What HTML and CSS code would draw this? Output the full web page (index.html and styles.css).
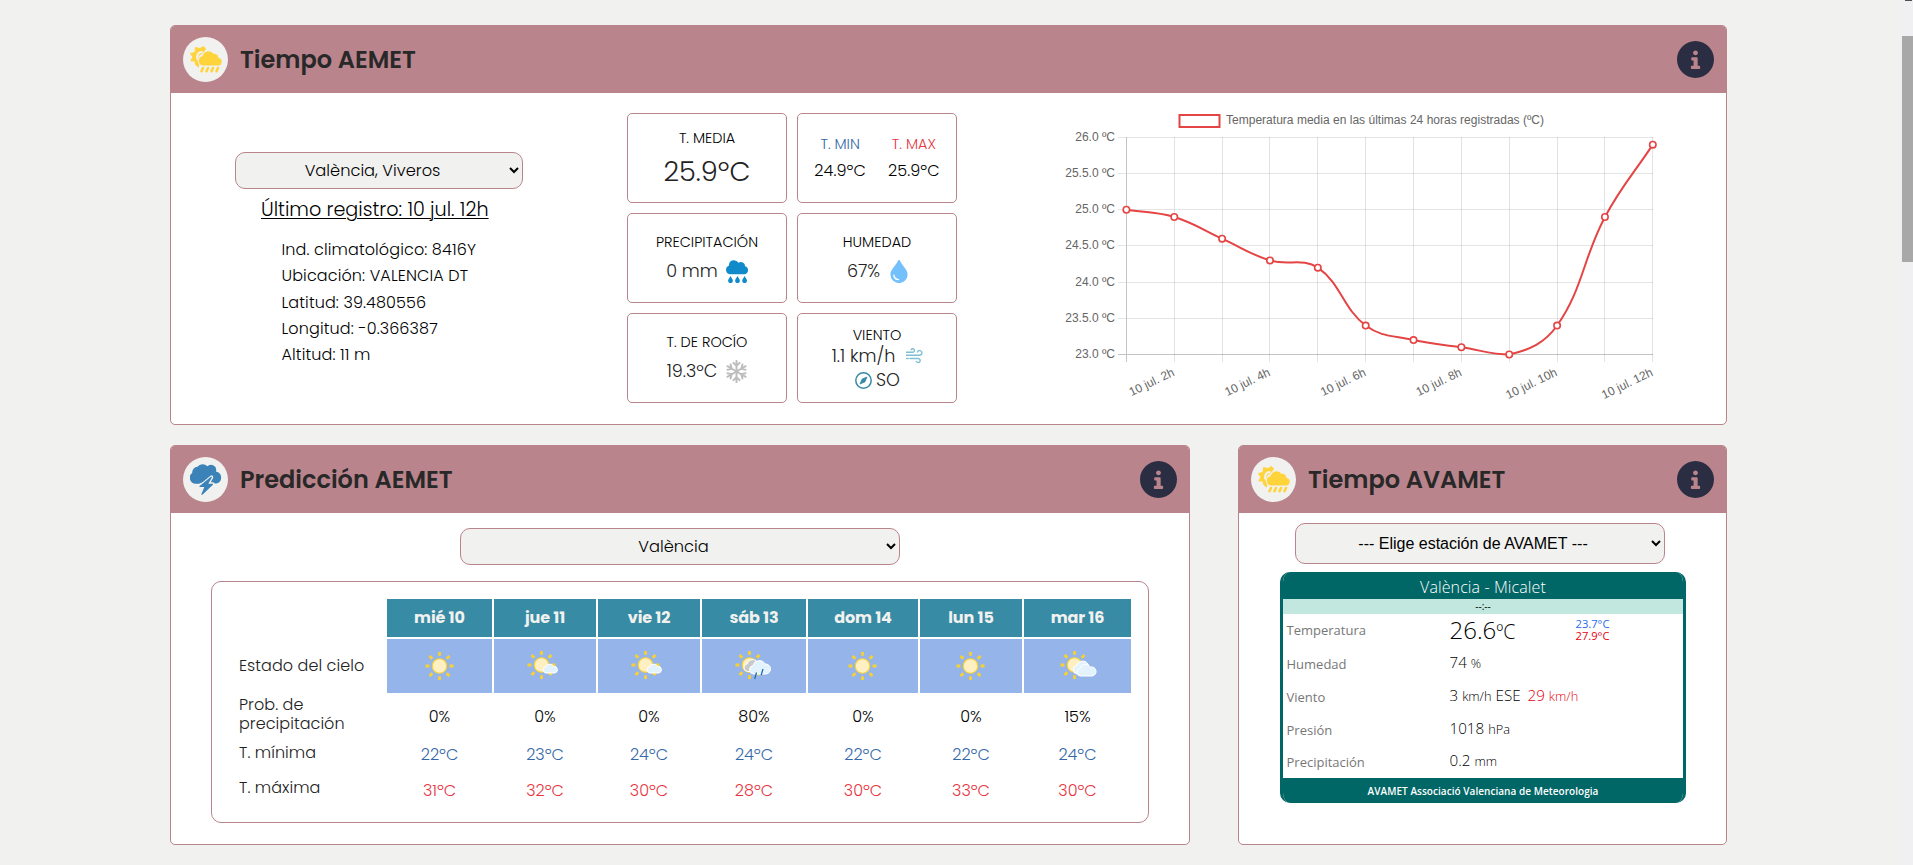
FILE: index.html
```html
<!DOCTYPE html>
<html lang="es">
<head>
<meta charset="utf-8">
<title>Tiempo</title>
<link rel="stylesheet" href="styles.css">
</head>
<body>
<svg class="sprite" aria-hidden="true">
  <symbol id="info" viewBox="8 8 496 496"><path d="M256 8C119.043 8 8 119.083 8 256c0 136.997 111.043 248 248 248s248-111.003 248-248C504 119.083 392.957 8 256 8zm0 126c18 0 33 15 33 33s-15 33-33 33-33-15-33-33 15-33 33-33zm62 236c0 9-6 15-14 15h-96c-8 0-14-6-14-15v-15c0-9 6-15 14-15h22v-70h-17c-8 0-14-6-14-14v-16c0-8 6-14 14-14h58c8 0 14 6 14 14v100h19c8 0 14 6 14 15z"/></symbol>
  <symbol id="sunrain" viewBox="0 0 32 28">
    <path d="M5.500 1.500 10 2.600 13.500.500 15.500 3 13 6.500 8 10 9 17 8.500 18 8.500 21 5.500 18.500 5 15 .800 14.800 3 11 .300 7.500 5 6.500z" stroke="#ffd43b" stroke-linejoin="round"/>
    <path d="M10 15a4.800 4.800 0 0 1-3-4.500A5.500 5.500 0 0 1 12.500 6" fill="none" stroke="#f1f1ef" stroke-width="2"/>
    <path d="M13.500 20a5.200 5.200 0 0 1-1.300-10.200 6.500 6.500 0 0 1 11.500-2.500 4.500 4.500 0 0 1 5 4.200 4.300 4.300 0 0 1-1.200 8.500z" stroke="#f1f1ef" stroke-width="1"/>
    <path d="m13 22-1.500 3.200M18 22l-1.500 3.200M23 22l-1.500 3.200M28 22l-1.500 3.200" stroke="#ffd43b" stroke-width="2.600" stroke-linecap="round"/>
  </symbol>
  <symbol id="storm" viewBox="0 0 32 32">
    <path d="M6 19.800A6 6 0 0 1 2.200 9 5.800 5.800 0 0 1 7.500 2.800 6.500 6.500 0 0 1 17.300 2.200 5.300 5.300 0 0 1 26 7.500 6.200 6.200 0 0 1 26.500 19.600H22L16 17 9 19.800z"/>
    <path d="M21.500 13 10 22.500h5L12 30.500 22.800 20h-5l3.700-6.500z" fill="none" stroke="#f1f1ef" stroke-width="3.400" stroke-linejoin="round"/>
    <path d="M21.300 13.300 10 22.500h5.200L12 30.200 22.500 20.300h-5.200z" stroke="#3b82b8" stroke-width="1.200" stroke-linejoin="round"/>
  </symbol>
  <symbol id="rain" viewBox="0 0 23 23">
    <path d="M4.500 14.300A4.600 4.600 0 0 1 3 5.400 5 5 0 0 1 7.200.200a5.500 5.500 0 0 1 5.300 2.500 4.200 4.200 0 0 1 6.600 3.500A4.200 4.200 0 0 1 18.800 14.300z"/>
    <path d="M4.500 16c.8 1.800 2.400 3 2.400 4.700a2.400 2.400 0 0 1-4.800 0c0-1.700 1.600-2.900 2.400-4.700z"/>
    <path d="M11.500 16c.8 1.800 2.400 3 2.400 4.700a2.400 2.400 0 0 1-4.800 0c0-1.700 1.600-2.900 2.400-4.700zM18.600 16c.8 1.800 2.400 3 2.400 4.700a2.400 2.400 0 0 1-4.800 0c0-1.700 1.600-2.900 2.400-4.700z"/>
  </symbol>
  <symbol id="drop" viewBox="0 0 18 23">
    <path d="M9 0c.6 0 .9.300 1.100.8C12 6 17.600 9.300 17.600 14.500a8.600 8.600 0 0 1-17.200 0C.4 9.300 6 6 7.900.8 8.100.300 8.400 0 9 0z"/>
    <path d="M3.900 15.300c.3 2.600 2 4 4.600 4.300" fill="none" stroke="#fff" stroke-width="1.400" stroke-linecap="round"/>
  </symbol>
  <symbol id="snow" viewBox="0 0 24 24">
    <g fill="none" stroke="#bdbdbd" stroke-width="2.100" stroke-linecap="round">
      <path d="M12 12V1M8.800 3 12 6.200 15.200 3"/>
      <path d="M12 12V1M8.800 3 12 6.200 15.200 3" transform="rotate(60 12 12)"/>
      <path d="M12 12V1M8.800 3 12 6.200 15.200 3" transform="rotate(120 12 12)"/>
      <path d="M12 12V1M8.800 3 12 6.200 15.200 3" transform="rotate(180 12 12)"/>
      <path d="M12 12V1M8.800 3 12 6.200 15.200 3" transform="rotate(240 12 12)"/>
      <path d="M12 12V1M8.800 3 12 6.200 15.200 3" transform="rotate(300 12 12)"/>
    </g>
  </symbol>
  <symbol id="wind" viewBox="0 0 17 16">
    <path d="M.5 4.200h6.300a1.700 1.700 0 1 0-1.600-2.500M.5 7.200h13.200a2.300 2.300 0 1 0-2.200-3.200M.5 10.500h1.700M4 10.500h8.300a2 2 0 1 1-1.900 3" fill="none" stroke="#7fc0d2" stroke-width="1.400" stroke-linecap="round"/>
  </symbol>
  <symbol id="compass" viewBox="0 0 17 17">
    <circle cx="8.500" cy="8.500" r="7.700" fill="none" stroke="#378ba4" stroke-width="1.500"/>
    <path d="M12 5 9.900 9.900 5 12 7.100 7.100z" stroke="#378ba4" stroke-width=".8" stroke-linejoin="round"/>
  </symbol>
  <symbol id="sun" viewBox="0 0 30 30">
    <path d="M15 .5v4M15 25.500v4M.5 15h4M25.500 15h4M4.700 4.700l2.900 2.900M22.400 22.400l2.900 2.900M4.700 25.300l2.900-2.900M22.400 7.600l2.900-2.900" stroke="#f8d12f" stroke-width="2.900"/>
    <circle cx="15" cy="15" r="7.500" fill="#fff0c4" stroke="#f8d12f" stroke-width="1.200"/>
  </symbol>
</svg>
<main class="page">
  <section class="card wide">
    <header class="bar">
      <span class="badge"><svg class="ic-sunrain"><use href="#sunrain"/></svg></span>
      <h2>Tiempo AEMET</h2>
      <svg class="info"><use href="#info"/></svg>
    </header>
    <div class="current">
      <div class="station">
        <select class="pick"><option>València, Viveros</option></select>
        <p class="last">Último registro: 10 jul. 12h</p>
        <ul class="facts">
          <li>Ind. climatológico: 8416Y</li>
          <li>Ubicación: VALENCIA DT</li>
          <li>Latitud: 39.480556</li>
          <li>Longitud: -0.366387</li>
          <li>Altitud: 11 m</li>
        </ul>
      </div>
      <div class="tiles">
        <div class="tile media"><h3>T. MEDIA</h3><p class="big">25.9ºC</p></div>
        <div class="tile minmax">
          <div><h3 class="cold">T. MIN</h3><p>24.9ºC</p></div>
          <div><h3 class="hot">T. MAX</h3><p>25.9ºC</p></div>
        </div>
        <div class="tile std"><h3>PRECIPITACIÓN</h3><p class="val">0 mm <svg class="ic-rain"><use href="#rain"/></svg></p></div>
        <div class="tile std"><h3>HUMEDAD</h3><p class="val hum">67% <svg class="ic-drop"><use href="#drop"/></svg></p></div>
        <div class="tile std"><h3>T. DE ROCÍO</h3><p class="val">19.3ºC <svg class="ic-snow"><use href="#snow"/></svg></p></div>
        <div class="tile wind"><h3>VIENTO</h3><p class="val speed">1.1 km/h <svg class="ic-wind"><use href="#wind"/></svg></p><p class="val dir"><svg class="ic-compass"><use href="#compass"/></svg>SO</p></div>
      </div>
      <svg class="chart" id="chart" viewBox="1040 100 640 315"></svg>
    </div>
  </section>
  <div class="row">
    <section class="card forecast">
      <header class="bar">
        <span class="badge"><svg class="ic-storm"><use href="#storm"/></svg></span>
        <h2>Predicción AEMET</h2>
        <svg class="info"><use href="#info"/></svg>
      </header>
      <div class="body">
        <select class="pick pick-city"><option>València</option></select>
        <div class="panel">
          <div class="grid">
            <span></span><b>mié 10</b><b>jue 11</b><b>vie 12</b><b>sáb 13</b><b>dom 14</b><b>lun 15</b><b>mar 16</b>
            <span class="lab sky">Estado del cielo</span>
            <i><svg viewBox="0 0 40 34"><use href="#sun" x="5" y="2.500" width="29" height="29"/></svg></i>
            <i><svg viewBox="0 0 40 34"><use href="#sun" x="2" y="1.500" width="29" height="29"/><path class="cloud" d="M20.500 24a3.300 3.300 0 0 1 0-6.300 4.600 4.600 0 0 1 8-.5 3.500 3.500 0 0 1 1.500 6.800z"/></svg></i>
            <i><svg viewBox="0 0 40 34"><use href="#sun" x="2" y="1.500" width="29" height="29"/><path class="cloud" d="M20.500 24a3.300 3.300 0 0 1 0-6.300 4.600 4.600 0 0 1 8-.5 3.500 3.500 0 0 1 1.500 6.800z"/></svg></i>
            <i><svg viewBox="0 0 40 34"><use href="#sun" x="1" y="1.500" width="29" height="29"/><path class="cloud gray" d="M13.500 22.500a3.800 3.800 0 0 1-.5-7.500A6 6 0 0 1 22 11.500l1 11z"/><path class="cloud" d="M19.500 25a4.300 4.300 0 0 1-.5-8.500 6.500 6.500 0 0 1 12-1.500 4.600 4.600 0 0 1 1 10z"/><path d="m22.500 23.500-1.800 6.500m8.300-10-1.800 6" stroke="#1466b0" stroke-width="1.200"/></svg></i>
            <i><svg viewBox="0 0 40 34"><use href="#sun" x="5" y="2.500" width="29" height="29"/></svg></i>
            <i><svg viewBox="0 0 40 34"><use href="#sun" x="5" y="2.500" width="29" height="29"/></svg></i>
            <i><svg viewBox="0 0 40 34"><use href="#sun" x="2" y="1.500" width="29" height="29"/><path class="cloud" d="M19 25a4.300 4.300 0 0 1 0-8.500 6 6 0 0 1 11-1.500l1 10z"/><path class="cloud" d="M22.500 27a3.800 3.800 0 0 1-.5-7.500 5.800 5.800 0 0 1 10.500-1.500 4.600 4.600 0 0 1 2 9z"/></svg></i>
            <span class="lab prob">Prob. de precipitación</span>
            <em>0%</em><em>0%</em><em>0%</em><em>80%</em><em>0%</em><em>0%</em><em>15%</em>
            <span class="lab min">T. mínima</span>
            <em class="cold">22ºC</em><em class="cold">23ºC</em><em class="cold">24ºC</em><em class="cold">24ºC</em><em class="cold">22ºC</em><em class="cold">22ºC</em><em class="cold">24ºC</em>
            <span class="lab max">T. máxima</span>
            <em class="hot">31ºC</em><em class="hot">32ºC</em><em class="hot">30ºC</em><em class="hot">28ºC</em><em class="hot">30ºC</em><em class="hot">33ºC</em><em class="hot">30ºC</em>
          </div>
        </div>
      </div>
    </section>
    <section class="card avamet">
      <header class="bar">
        <span class="badge"><svg class="ic-sunrain"><use href="#sunrain"/></svg></span>
        <h2>Tiempo AVAMET</h2>
        <svg class="info"><use href="#info"/></svg>
      </header>
      <div class="body">
        <select class="pick pick-station"><option>--- Elige estación de AVAMET ---</option></select>
        <div class="widget">
          <h4>València - Micalet</h4>
          <div class="time">--:--</div>
          <dl>
            <dt class="r1">Temperatura</dt><dd class="temp"><span>26.6<small>ºC</small></span><span class="range"><span class="lo">23.7°C</span><span class="hi">27.9°C</span></span></dd>
            <dt>Humedad</dt><dd>74 <small>%</small></dd>
            <dt>Viento</dt><dd>3 <small>km/h</small> ESE <span class="gust">29 <small>km/h</small></span></dd>
            <dt>Presión</dt><dd>1018 <small>hPa</small></dd>
            <dt>Precipitación</dt><dd>0.2 <small>mm</small></dd>
          </dl>
          <div class="foot">AVAMET Associació Valenciana de Meteorologia</div>
        </div>
      </div>
    </section>
  </div>
</main>
<aside class="scroll"><span class="arrow"></span><span class="thumb"></span></aside>
<script src="chart.js"></script>
</body>
</html>
```

FILE: styles.css
```css
* { box-sizing: border-box; margin: 0; padding: 0; }
body {
  display: flex;
  justify-content: space-between;
  height: 865px;
  overflow: hidden;
  background: #f1f1ef;
  color: #000;
  font-family: Poppins, Inter, sans-serif;
  font-weight: 300;
  font-size: 16px;
}
.sprite { position: absolute; width: 0; height: 0; }
svg { display: block; flex: none; }
.page { width: 1727px; padding: 25px 0 0 170px; }
.card { background: #fff; border: 1px solid #b9848c; border-radius: 5px; height: 400px; overflow: hidden; }
.wide { width: 1557px; }
.row { display: flex; gap: 48px; margin-top: 20px; }
.forecast { width: 1020px; }
.avamet { width: 489px; }
.bar { display: flex; align-items: center; height: 67px; padding: 0 12px; background: #b9848c; }
.badge { display: flex; align-items: center; justify-content: center; width: 45px; height: 45px; border-radius: 50%; background: #f1f1ef; }
.bar h2 { flex: 1; margin: 0 0 0 12px; font-size: 24px; font-weight: 600; line-height: 36px; color: #282828; white-space: nowrap; }
.info { width: 37px; height: 37px; fill: #2b2d42; }
.ic-sunrain { width: 32px; height: 28px; fill: #ffd43b; }
.ic-storm { width: 32px; height: 32px; fill: #3b82b8; }

.pick { display: block; height: 37px; padding-right: 1px; border: 1px solid #b9848c; border-radius: 10px; background: #f1f1ef; color: #000; font: 300 16.250px Poppins, Inter, sans-serif; text-align: center; text-align-last: center; }
.current { display: flex; height: 331px; }
.station { width: 456px; padding: 59px 0 0 64px; }
.station .pick { width: 288px; }
.last { margin: 5px 0 0 26px; font-size: 19.200px; line-height: 31px; text-decoration: underline; text-underline-offset: 2px; text-decoration-thickness: 1px; white-space: nowrap; }
.facts { margin: 12px 0 0 46.500px; list-style: none; line-height: 26.250px; letter-spacing: .12px; }
.tiles { display: grid; grid-template-columns: 160px 160px; grid-auto-rows: 90px; gap: 10px; width: 413px; padding-top: 20px; }
.tile { border: 1px solid #b9848c; border-radius: 5px; text-align: center; }
.tile h3 { font-size: 14.400px; font-weight: 300; line-height: 20px; color: #000; }
.media { padding-top: 14px; }
.big { margin-top: 6px; font-size: 27.200px; line-height: 36px; color: #222; }
.minmax { display: flex; justify-content: center; gap: 22px; padding-top: 20px; }
.minmax p { margin-top: 7px; line-height: 20px; letter-spacing: .1px; }
.cold, .tile .cold { color: #3468a8; }
.hot, .tile .hot { color: #e63541; }
.std { padding-top: 18px; }
.val { display: flex; align-items: center; justify-content: center; gap: 8px; height: 24px; margin-top: 7px; padding-left: 1px; font-size: 17.600px; line-height: 24px; color: #222; }
.hum { gap: 10px; }
.wind { padding-top: 11px; }
.speed { gap: 11px; height: 20px; line-height: 20px; margin-top: 1px; }
.dir { gap: 4px; height: 20px; line-height: 20px; margin-top: 4px; }
.ic-rain { width: 23px; height: 23px; fill: #118acb; }
.ic-drop { width: 18px; height: 23px; fill: #74c0fc; }
.ic-snow { width: 23px; height: 23px; }
.ic-wind { width: 17px; height: 16px; }
.ic-compass { width: 17px; height: 17px; fill: #378ba4; }
.chart { width: 640px; height: 315px; margin-top: 7px; font: 12px "Liberation Sans", Arial, sans-serif; }

.pick-city { width: 440px; margin: 15px 0 0 289px; }
.panel { width: 938px; height: 242px; margin: 16px 0 0 40px; padding: 17px 0 0 17px; border: 1px solid #b9848c; border-radius: 10px; }
.grid { display: grid; grid-template-columns: 156px 105px 102px 102px 104px 110px 102px 107px; grid-template-rows: 38px 54px 45px 29px 35px; gap: 2px; }
.grid b { background: #378ba4; color: #f1f1ef; font-size: 16px; font-weight: 700; line-height: 37px; text-align: center; letter-spacing: -.1px; }
.grid i { display: flex; align-items: center; justify-content: center; background: #95b5ea; }
.grid i svg { width: 40px; height: 34px; }
.cloud { fill: #e3f3fd; stroke: #fff; stroke-width: 1; }
.gray { fill: #c9c9c9; }
.grid em { font-style: normal; text-align: center; padding-top: 12px; line-height: 20px; }
.grid em.cold { padding-top: 3px; }
.grid em.hot { padding-top: 8px; }
.lab { padding-left: 10px; color: #222; line-height: 19px; letter-spacing: .06px; }
.sky { padding-top: 17px; }
.prob { padding-right: 30px; }
.min { padding-top: 1px; }
.max { padding-top: 5px; }

.pick-station { width: 370px; height: 41px; margin: 10px 0 0 56px; padding-right: 2px; font: 16px "Liberation Sans", Arial, sans-serif; }
.widget { width: 406px; height: 231px; margin: 8px 0 0 41px; border: 3px solid #006666; border-top: 0; border-bottom: 0; border-radius: 10px; background: #fff; overflow: hidden; font-family: "Open Sans", sans-serif; font-weight: 300; }
.widget h4 { height: 27px; background: #006666; color: #fff; font-size: 16px; font-weight: 300; line-height: 30px; text-align: center; letter-spacing: .1px; }
.time { height: 15px; background: #c1e7df; font-size: 10px; line-height: 15px; text-align: center; font-weight: 400; }
.widget dl { display: grid; grid-template-columns: 163px 1fr; grid-template-rows: 37px 33px 33px 32px 29px; padding-left: 3px; height: 164px; }
.widget dt { font-size: 13px; line-height: 18px; padding: 4px 0 0 .5px; color: #777; font-weight: 400; }
.widget dt.r1 { padding-top: 7px; }
.widget dd { padding: 1px 0 0 .5px; font-size: 15.200px; line-height: 20px; white-space: nowrap; }
.widget dd small { font-size: 12.800px; }
.widget dd.temp { display: flex; padding-top: 1px; font-size: 24px; line-height: 30px; }
.widget dd.temp small { font-size: 19.500px; }
.range { display: flex; flex-direction: column; margin-left: 60px; padding-top: 3px; font-size: 11.200px; font-weight: 400; line-height: 12px; }
.lo { color: #2a6cf0; }
.hi, .gust { color: #e60012; }
.gust { margin-left: 3px; }
.foot { height: 25px; background: #006666; color: #fff; font-size: 10px; font-weight: 600; line-height: 27px; text-align: center; letter-spacing: .04px; }

.scroll { width: 13px; height: 865px; padding-left: 2px; background: #f0f0f2; }
.arrow { display: block; width: 7px; height: 1px; margin-left: 3px; background: #505050; }
.thumb { display: block; width: 11px; height: 226px; margin-top: 35px; background: #a8a8a8; }
```

FILE: chart.js
```javascript
const temps = [25, 24.9, 24.6, 24.3, 24.2, 23.4, 23.2, 23.1, 23, 23.4, 24.9, 25.9];
const left = 1126.4, right = 1652.8, top0 = 137.4, bottom = 354.5;
const step = (right - left) / 11;
const pts = temps.map((t, i) => ({ x: left + i * step, y: bottom - (t - 23) * (bottom - top0) / 3 }));
const out = [];
const line = (x1, y1, x2, y2, c) => out.push(`<path d="M${x1} ${y1}L${x2} ${y2}" stroke="${c}"/>`);
const snap = v => Math.floor(v) + 0.5;

for (let k = 0; k <= 6; k++) {
  const y = snap(top0 + k * (bottom - top0) / 6);
  line(1118, y, 1653, y, k === 6 ? '#c4c4c4' : '#e5e5e5');
  out.push(`<text x="1115" y="${y + 3}" text-anchor="end" fill="#666">${26 - k * 0.5}.0 ºC</text>`);
}
pts.forEach((p, i) => {
  const x = snap(p.x);
  line(x, 137, x, 362, i ? 'rgba(0,0,0,.11)' : '#c4c4c4');
  if (i % 2) {
    out.push(`<text transform="translate(${p.x + 1} 375) rotate(-26)" text-anchor="end" fill="#666">10 jul. ${i + 1}h</text>`);
  }
});

// Spline with tension weighted by the distance to each neighbour
const tension = 0.4;
const ctrl = pts.map((p, i) => {
  const a = pts[i - 1] || p, b = pts[i + 1] || p;
  const d1 = Math.hypot(p.x - a.x, p.y - a.y), d2 = Math.hypot(b.x - p.x, b.y - p.y);
  const f1 = tension * d1 / (d1 + d2), f2 = tension * d2 / (d1 + d2);
  const cap = y => Math.min(bottom, Math.max(top0, y));
  return {
    px: p.x - f1 * (b.x - a.x), py: cap(p.y - f1 * (b.y - a.y)),
    nx: p.x + f2 * (b.x - a.x), ny: cap(p.y + f2 * (b.y - a.y))
  };
});
let d = `M${pts[0].x} ${pts[0].y}`;
for (let i = 1; i < pts.length; i++) {
  d += `C${ctrl[i - 1].nx} ${ctrl[i - 1].ny} ${ctrl[i].px} ${ctrl[i].py} ${pts[i].x} ${pts[i].y}`;
}
out.push(`<path d="${d}" fill="none" stroke="#e54444" stroke-width="2"/>`);
pts.forEach(p => out.push(`<circle cx="${p.x}" cy="${p.y}" r="3.200" fill="#fff" stroke="#e54444" stroke-width="1.600"/>`));
out.push('<rect x="1179.500" y="115" width="40" height="12" fill="none" stroke="#e54444" stroke-width="2"/>');
out.push('<text x="1226" y="124" fill="#666" textLength="318">Temperatura media en las últimas 24 horas registradas (ºC)</text>');
document.getElementById('chart').innerHTML = out.join('');
```
